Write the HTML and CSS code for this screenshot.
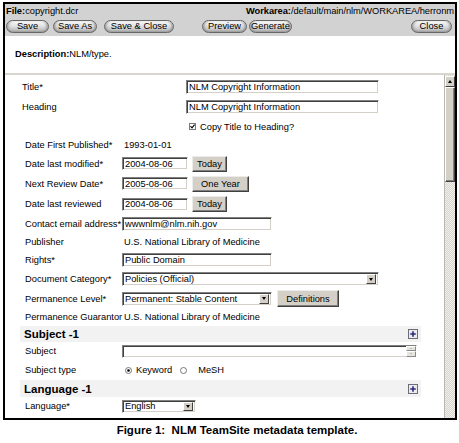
FILE: index.html
```html
<!DOCTYPE html>
<html>
<head>
<meta charset="utf-8">
<title>NLM TeamSite metadata template</title>
<link rel="stylesheet" href="styles.css">
</head>
<body>
<div class="frame">
  <div class="toolbar">
    <div class="pathrow">
      <span class="file"><b>File:</b>copyright.dcr</span>
      <span class="workarea"><b>Workarea:</b>/default/main/nlm/WORKAREA/herronm</span>
    </div>
    <div class="btnrow">
      <span class="pill p-save">Save</span>
      <span class="pill p-saveas">Save As</span>
      <span class="pill p-saveclose">Save &amp; Close</span>
      <span class="pill p-preview">Preview</span>
      <span class="pill p-generate">Generate</span>
      <span class="pill p-close">Close</span>
    </div>
  </div>
  <div class="desc"><b>Description:</b>NLM/type.</div>
  <div class="main">
    <div class="form">
      <div class="lbl lbl-tight">Title*</div>
      <div class="ctl"><span class="inp w-title">NLM Copyright Information</span></div>

      <div class="lbl lbl-tight">Heading</div>
      <div class="ctl"><span class="inp w-title">NLM Copyright Information</span></div>

      <div class="lbl"></div>
      <div class="ctl ctl-check">
        <svg class="chk" width="7" height="7" viewBox="0 0 7 7"><rect x="0.5" y="0.5" width="6" height="6" fill="#fff" stroke="#7a7a7a"/><path d="M1.5 3.2 L3 4.8 L5.6 1.6" fill="none" stroke="#000" stroke-width="1.1"/></svg>
        <span class="chk-text">Copy Title to Heading?</span>
      </div>

      <div class="lbl">Date First Published*</div>
      <div class="ctl"><span class="val">1993-01-01</span></div>

      <div class="lbl">Date last modified*</div>
      <div class="ctl"><span class="inp w-date">2004-08-06</span><span class="btn w-today">Today</span></div>

      <div class="lbl">Next Review Date*</div>
      <div class="ctl"><span class="inp w-date">2005-08-06</span><span class="btn w-year">One Year</span></div>

      <div class="lbl">Date last reviewed</div>
      <div class="ctl"><span class="inp w-date">2004-08-06</span><span class="btn w-today">Today</span></div>

      <div class="lbl">Contact email address*</div>
      <div class="ctl"><span class="inp w-mid">wwwnlm@nlm.nih.gov</span></div>

      <div class="lbl">Publisher</div>
      <div class="ctl"><span class="val">U.S. National Library of Medicine</span></div>

      <div class="lbl">Rights*</div>
      <div class="ctl"><span class="inp w-mid">Public Domain</span></div>

      <div class="lbl">Document Category*</div>
      <div class="ctl"><span class="inp sel w-cat">Policies (Official)<span class="dd"><i class="tri-down"></i></span></span></div>

      <div class="lbl">Permanence Level*</div>
      <div class="ctl"><span class="inp sel w-mid">Permanent: Stable Content<span class="dd"><i class="tri-down"></i></span></span><span class="btn w-def">Definitions</span></div>

      <div class="lbl">Permanence Guarantor</div>
      <div class="ctl"><span class="val">U.S. National Library of Medicine</span></div>

      <div class="sect">
        <span class="sect-title">Subject -1</span>
        <svg class="plus" width="10" height="10" viewBox="0 0 10 10"><rect x="0.5" y="0.5" width="9" height="9" fill="#ecebf0" stroke="#6d6d78"/><path d="M5 2.2 V7.8 M2.2 5 H7.8" stroke="#2c2c7a" stroke-width="1.6"/></svg>
      </div>

      <div class="lbl">Subject</div>
      <div class="ctl"><span class="inp txa w-subj"><span class="spin"><span class="spin-b"><i class="tri-up-s"></i></span><span class="spin-b"><i class="tri-down-s"></i></span></span></span></div>

      <div class="lbl">Subject type</div>
      <div class="ctl ctl-radio">
        <svg class="radio" width="7" height="7" viewBox="0 0 7 7"><circle cx="3.5" cy="3.5" r="3" fill="#fff" stroke="#777"/><circle cx="3.5" cy="3.5" r="1.3" fill="#000"/></svg>
        <span class="r1">Keyword</span>
        <svg class="radio" width="7" height="7" viewBox="0 0 7 7"><circle cx="3.5" cy="3.5" r="3" fill="#fff" stroke="#777"/></svg>
        <span class="r2">MeSH</span>
      </div>

      <div class="sect sect-lang">
        <span class="sect-title">Language -1</span>
        <svg class="plus" width="10" height="10" viewBox="0 0 10 10"><rect x="0.5" y="0.5" width="9" height="9" fill="#ecebf0" stroke="#6d6d78"/><path d="M5 2.2 V7.8 M2.2 5 H7.8" stroke="#2c2c7a" stroke-width="1.6"/></svg>
      </div>

      <div class="lbl">Language*</div>
      <div class="ctl"><span class="inp sel w-lang">English<span class="dd"><i class="tri-down"></i></span></span></div>
    </div>
    <div class="vscroll">
      <div class="sb-up"><i class="tri-up"></i></div>
      <div class="sb-thumb"></div>
      <div class="sb-track"></div>
    </div>
  </div>
</div>
<div class="caption">Figure 1:&nbsp; NLM TeamSite metadata template.</div>
</body>
</html>
```

FILE: styles.css
```css
* { box-sizing: border-box; }
html, body { margin: 0; padding: 0; background: #fff; }
body {
  font-family: "Liberation Sans", Arial, sans-serif;
  font-size: 9.3px;
  color: #000;
}

.frame {
  margin: 2px 0 0 3px;
  width: 454px;
  height: 418px;
  border: 2px solid #000;
  display: flex;
  flex-direction: column;
  overflow: hidden;
}

/* toolbar */
.toolbar {
  background: #d2d2d2;
  height: 32px;
  flex: none;
  padding-left: 1px;
}
.pathrow {
  display: flex;
  height: 13px;
  line-height: 13px;
  white-space: nowrap;
  padding-top: 1px;
}
.file { flex: none; }
.workarea {
  flex: none;
  margin-left: auto;
  padding-right: 1px;
  letter-spacing: -0.05px;
}
.btnrow {
  display: flex;
  margin-top: 3px;
  height: 13px;
}
.pill {
  height: 13px;
  line-height: 11px;
  border: 1px solid #666;
  border-radius: 7px;
  text-align: center;
  white-space: nowrap;
  background: linear-gradient(#f7f7f7, #e6e6e6 40%, #c9c9c9 75%, #9d9d9d);
  box-shadow: inset 3px 0 3px -2px #8c8c8c, inset -3px 0 3px -2px #8c8c8c;
}
.p-save { width: 43px; }
.p-saveas { width: 44px; margin-left: 4px; }
.p-saveclose { width: 70px; margin-left: 7px; }
.p-preview { width: 45px; margin-left: 28px; }
.p-generate { width: 43px; margin-left: 2px; }
.p-close { width: 41px; margin-left: auto; margin-right: 3px; }

/* description */
.desc {
  flex: none;
  height: 39px;
  padding: 0 0 1px 10px;
  display: flex;
  align-items: center;
  border-bottom: 2px solid #d9d6cf;
  white-space: nowrap;
}

/* main area */
.main {
  flex: 1;
  display: flex;
  min-height: 0;
}
.form {
  flex: 1;
  display: grid;
  grid-template-columns: 100px 1fr;
  grid-template-rows: 20px 20px 19px 18px 19px 21px 20px 19px 18px 18px 20px 19px 18px 16px 18px 20px 17px 18px;
  align-content: start;
  padding: 2px 0 0 17px;
  overflow: hidden;
}
.lbl {
  display: flex;
  align-items: center;
  padding-left: 3px;
  white-space: nowrap;
}
.lbl-tight { padding-left: 0; }
.ctl {
  display: flex;
  align-items: center;
  white-space: nowrap;
}
.val { padding-left: 2px; }

.inp {
  display: flex;
  align-items: center;
  height: 14px;
  padding-left: 2px;
  background: #fff;
  border: 1px solid;
  border-color: #808080 #fff #fff #808080;
  box-shadow: inset 1px 1px 0 #404040, inset -1px -1px 0 #d4d0c8;
  overflow: hidden;
  white-space: nowrap;
}
.w-title { width: 193px; margin-left: 64px; }
.w-date { width: 66px; height: 13px; }
.w-mid { width: 150px; }
.w-cat { width: 257px; }
.w-lang { width: 74px; height: 13px; }
.w-subj { width: 295px; height: 13px; padding: 0; justify-content: flex-end; }

.sel { position: relative; }
.dd {
  position: absolute;
  right: 2px;
  top: 1px;
  width: 10px;
  height: 10px;
  background: #d4d0c8;
  border: 1px solid;
  border-color: #fff #404040 #404040 #fff;
  display: flex;
  align-items: center;
  justify-content: center;
}
.w-lang .dd { height: 9px; }
.tri-down {
  display: block;
  width: 0; height: 0;
  border-left: 2.5px solid transparent;
  border-right: 2.5px solid transparent;
  border-top: 3px solid #000;
}

.spin {
  display: flex;
  flex-direction: column;
  width: 10px;
  height: 11px;
}
.spin-b {
  flex: 1;
  background: #e6e4df;
  border: 1px solid;
  border-color: #fff #8a8a8a #8a8a8a #fff;
  display: flex;
  align-items: center;
  justify-content: center;
}
.tri-up-s, .tri-down-s {
  display: block;
  width: 0; height: 0;
  border-left: 1.5px solid transparent;
  border-right: 1.5px solid transparent;
}
.tri-up-s { border-bottom: 1.5px solid #9a9a9a; }
.tri-down-s { border-top: 1.5px solid #9a9a9a; }

.btn {
  display: flex;
  align-items: center;
  justify-content: center;
  height: 16px;
  background: #d4d0c8;
  border: 1px solid;
  border-color: #ececec #404040 #404040 #ececec;
  box-shadow: inset -1px -1px 0 #808080;
  white-space: nowrap;
}
.w-today { width: 35px; margin-left: 4px; }
.w-year { width: 57px; margin-left: 4px; }
.w-def { width: 62px; height: 17px; margin-left: 5px; }

.ctl-check { padding-left: 67px; }
.chk { flex: none; }
.chk-text { margin-left: 4px; }

.ctl-radio { padding-left: 3px; }
.radio { flex: none; }
.r1 { margin-left: 4px; }
.r2 { margin-left: 11px; }
.ctl-radio .radio + .r1 + .radio { margin-left: 8px; }

.sect {
  grid-column: 1 / -1;
  display: flex;
  align-items: center;
  justify-content: space-between;
  background: #f2f2f2;
  margin: 0 23px 0 -2px;
  padding: 0 3px 0 4px;
}
.sect-title {
  font-size: 11.5px;
  font-weight: bold;
}
.plus { flex: none; }

/* scrollbar */
.vscroll {
  flex: none;
  width: 11px;
  display: flex;
  flex-direction: column;
  padding-top: 1px;
  background: repeating-conic-gradient(#d6d3cc 0 25%, #f3f2ef 0 50%) 0 0 / 2px 2px;
  border-left: 1px solid #b8b6b0;
}
.sb-up {
  height: 11px;
  flex: none;
  background: #d4d0c8;
  border: 1px solid;
  border-color: #fff #404040 #404040 #fff;
  display: flex;
  align-items: center;
  justify-content: center;
}
.tri-up {
  display: block;
  width: 0; height: 0;
  border-left: 2.5px solid transparent;
  border-right: 2.5px solid transparent;
  border-bottom: 3px solid #000;
}
.sb-thumb {
  height: 95px;
  flex: none;
  background: #d4d0c8;
  border: 1px solid;
  border-color: #fff #404040 #404040 #fff;
  box-shadow: inset -1px -1px 0 #808080;
}
.sb-track { flex: 1; }

.caption {
  margin-top: 3px;
  height: 14px;
  line-height: 14px;
  text-align: center;
  padding-left: 15px;
  font-weight: bold;
  font-size: 11.5px;
  white-space: nowrap;
}
```
